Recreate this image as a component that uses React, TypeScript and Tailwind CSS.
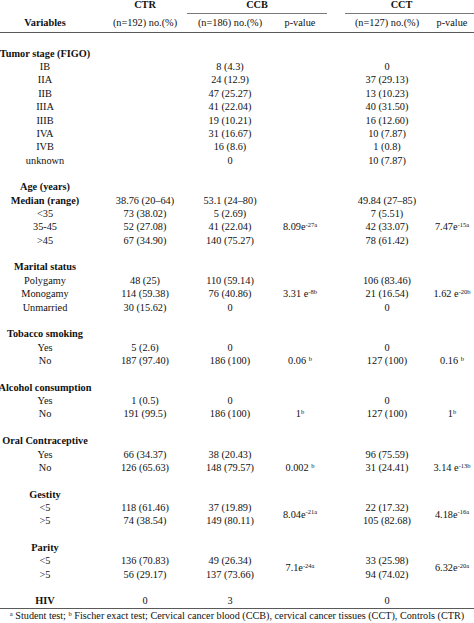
import type { ReactNode } from "react";

type P = [string, string];

interface Row {
  label?: string;
  bold?: boolean;
  ctr?: string;
  ccb?: string;
  ccbP?: P;
  cct?: string;
  cctP?: P;
  span?: "top" | "bottom";
  blank?: boolean;
}

const rows: Row[] = [
  { label: "Tumor stage (FIGO)", bold: true },
  { label: "IB", ccb: "8 (4.3)", cct: "0" },
  { label: "IIA", ccb: "24 (12.9)", cct: "37 (29.13)" },
  { label: "IIB", ccb: "47 (25.27)", cct: "13 (10.23)" },
  { label: "IIIA", ccb: "41 (22.04)", cct: "40 (31.50)" },
  { label: "IIIB", ccb: "19 (10.21)", cct: "16 (12.60)" },
  { label: "IVA", ccb: "31 (16.67)", cct: "10 (7.87)" },
  { label: "IVB", ccb: "16 (8.6)", cct: "1 (0.8)" },
  { label: "unknown", ccb: "0", cct: "10 (7.87)" },
  { blank: true },
  { label: "Age (years)", bold: true },
  { label: "Median (range)", bold: true, ctr: "38.76 (20–64)", ccb: "53.1 (24–80)", cct: "49.84 (27–85)" },
  { label: "<35", ctr: "73 (38.02)", ccb: "5 (2.69)", cct: "7 (5.51)" },
  { label: "35-45", ctr: "52 (27.08)", ccb: "41 (22.04)", ccbP: ["8.09e", "-27a"], cct: "42 (33.07)", cctP: ["7.47e", "-15a"] },
  { label: ">45", ctr: "67 (34.90)", ccb: "140 (75.27)", cct: "78 (61.42)" },
  { blank: true },
  { label: "Marital status", bold: true },
  { label: "Polygamy", ctr: "48 (25)", ccb: "110 (59.14)", cct: "106 (83.46)" },
  { label: "Monogamy", ctr: "114 (59.38)", ccb: "76 (40.86)", ccbP: ["3.31 e", "-8b"], cct: "21 (16.54)", cctP: ["1.62 e", "-20b"] },
  { label: "Unmarried", ctr: "30 (15.62)", ccb: "0", cct: "0" },
  { blank: true },
  { label: "Tobacco smoking", bold: true },
  { label: "Yes", ctr: "5 (2.6)", ccb: "0", cct: "0" },
  { label: "No", ctr: "187 (97.40)", ccb: "186 (100)", ccbP: ["0.06 ", "b"], cct: "127 (100)", cctP: ["0.16 ", "b"] },
  { blank: true },
  { label: "Alcohol consumption", bold: true },
  { label: "Yes", ctr: "1 (0.5)", ccb: "0", cct: "0" },
  { label: "No", ctr: "191 (99.5)", ccb: "186 (100)", ccbP: ["1", "b"], cct: "127 (100)", cctP: ["1", "b"] },
  { blank: true },
  { label: "Oral Contraceptive", bold: true },
  { label: "Yes", ctr: "66 (34.37)", ccb: "38 (20.43)", cct: "96 (75.59)" },
  { label: "No", ctr: "126 (65.63)", ccb: "148 (79.57)", ccbP: ["0.002 ", "b"], cct: "31 (24.41)", cctP: ["3.14 e", "-13b"] },
  { blank: true },
  { label: "Gestity", bold: true },
  { label: "<5", ctr: "118 (61.46)", ccb: "37 (19.89)", ccbP: ["8.04e", "-21a"], cct: "22 (17.32)", cctP: ["4.18e", "-16a"], span: "top" },
  { label: ">5", ctr: "74 (38.54)", ccb: "149 (80.11)", cct: "105 (82.68)", span: "bottom" },
  { blank: true },
  { label: "Parity", bold: true },
  { label: "<5", ctr: "136 (70.83)", ccb: "49 (26.34)", ccbP: ["7.1e", "-24a"], cct: "33 (25.98)", cctP: ["6.32e", "-20a"], span: "top" },
  { label: ">5", ctr: "56 (29.17)", ccb: "137 (73.66)", cct: "94 (74.02)", span: "bottom" },
  { blank: true },
  { label: "HIV", bold: true, ctr: "0", ccb: "3", cct: "0" },
];

const cell = "flex items-center justify-center whitespace-nowrap";

const Pv = ({ p }: { p?: P }) =>
  p ? (
    <span className="whitespace-pre">
      {p[0]}
      <sup className="text-[6.5px]">{p[1]}</sup>
    </span>
  ) : null;

const Cells = ({ r }: { r: Row }) => {
  const out: ReactNode[] = [
    <div key="a" className={`${cell} ${r.bold ? "font-bold" : ""}`}>{r.label}</div>,
    <div key="s1" />,
    <div key="b" className={cell}>{r.ctr}</div>,
    <div key="s2" />,
    <div key="c" className={cell}>{r.ccb}</div>,
  ];
  if (r.span !== "bottom")
    out.push(
      <div key="d" className={`${cell} ${r.span === "top" ? "row-span-2" : ""}`}>
        <Pv p={r.ccbP} />
      </div>
    );
  out.push(<div key="s3" />, <div key="e" className={cell}>{r.cct}</div>);
  if (r.span !== "bottom")
    out.push(
      <div key="f" className={`${cell} ${r.span === "top" ? "row-span-2" : ""}`}>
        <Pv p={r.cctP} />
      </div>
    );
  return <>{out}</>;
};

export default function App() {
  return (
    <div className="w-[474px] h-[623px] overflow-hidden bg-white text-[#111] text-[10.3px] leading-[13.37px] font-['Liberation_Serif','Times_New_Roman',serif]">
      {/* group headers */}
      <div className="mt-[-2px] grid grid-cols-[100px_90px_134px_155px] h-[13.37px] font-bold">
        <div />
        <div className={cell}>CTR</div>
        <div className={cell}>CCB</div>
        <div className={cell}>CCT</div>
      </div>
      <div className="flex h-[5.13px] items-center">
        <div className="ml-[187px] w-[140px] h-px bg-[#7a7a7a]" />
        <div className="ml-[18px] flex-1 h-px bg-[#7a7a7a]" />
      </div>
      <div className="grid grid-cols-[90px_10px_90px_5px_70px_70px_17px_70px_60px] h-[13.37px]">
        <div className={`${cell} font-bold`}>Variables</div>
        <div />
        <div className={cell}>(n=192) no.(%)</div>
        <div />
        <div className={cell}>(n=186) no.(%)</div>
        <div className={cell}>p-value</div>
        <div />
        <div className={cell}>(n=127) no.(%)</div>
        <div className={cell}>p-value</div>
      </div>
      <div className="mt-[2px] h-[1.5px] bg-[#5a5a5a]" />

      {/* body */}
      <div className="mt-[13.4px] grid grid-cols-[90px_10px_90px_5px_70px_70px_17px_70px_60px] auto-rows-[13.37px]">
        {rows.map((r, i) =>
          r.blank ? <div key={i} className="col-span-full" /> : <Cells key={i} r={r} />
        )}
      </div>

      <div className="h-px bg-[#5a5a5a]" />
      <div className="text-[10.2px] leading-[13px] text-center whitespace-nowrap">
        <sup className="text-[6.5px]">a</sup> Student test; <sup className="text-[6.5px]">b</sup> Fischer exact
        test; Cervical cancer blood (CCB), cervical cancer tissues (CCT), Controls (CTR)
      </div>
    </div>
  );
}
